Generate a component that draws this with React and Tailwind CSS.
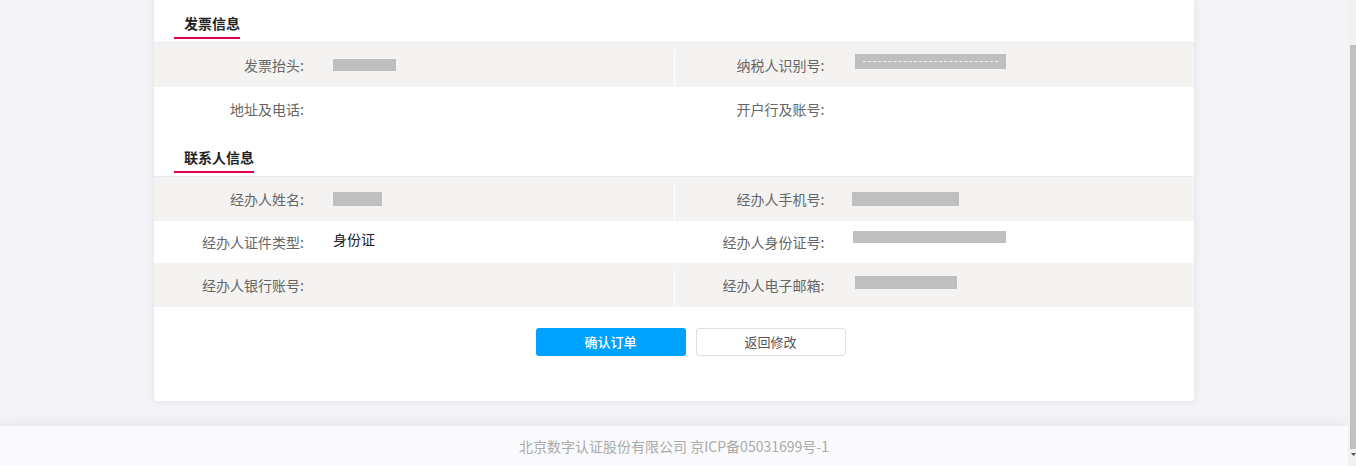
import React from "react";

const font = { fontFamily: '"Noto Sans CJK SC", "Noto Sans", "Liberation Sans", sans-serif' };

function Redacted({ w, h, dashed }) {
  return (
    <span className={`${w} ${h} bg-[#bfbfbf] flex items-center px-[8px]`}>
      {dashed && <span className="w-full border-t border-dashed border-white/80" />}
    </span>
  );
}

function SectionTitle({ children }) {
  return (
    <div className="h-[46px] border-b border-[#e9e9f1] flex items-end pl-[20px]">
      <div className="pl-[10px] pb-[3px] border-b-2 border-[#e4004f] text-[14px] font-bold text-[#222] leading-[22px] mb-[3px]">
        {children}
      </div>
    </div>
  );
}

function Row({ gray, h = "h-[44px]", left, right }) {
  return (
    <div className={`flex ${h} ${gray ? "bg-[#f4f3f2]" : "bg-white"}`}>
      <div className="flex-1 flex items-center">
        <span className="w-[150px] text-right text-[14px] text-[#666]">{left[0]}</span>
        <span className="ml-[29px] flex items-center">{left[1]}</span>
      </div>
      <div className={`w-px self-end h-[37px] ${gray ? "bg-white" : "bg-transparent"}`} />
      <div className="flex-1 flex items-center">
        <span className="w-[150px] text-right text-[14px] text-[#666]">{right[0]}</span>
        <span className="ml-[30px] flex items-center">{right[1]}</span>
      </div>
    </div>
  );
}

export default function App() {
  return (
    <div className="flex h-[466px] w-full overflow-hidden bg-[#f3f3f8]" style={font}>
      <div className="flex-1 flex flex-col">
        <div className="flex-1 flex justify-center">
          <div className="w-[1040px] h-[404px] -mt-[3px] bg-white rounded-b-[4px] shadow-[0_0_8px_rgba(0,0,0,0.08)] flex flex-col">
            <SectionTitle>发票信息</SectionTitle>
            <Row
              gray
              left={["发票抬头:", <Redacted w="w-[63px]" h="h-[12px]" />]}
              right={["纳税人识别号:", <span className="-mt-[8px] flex"><Redacted w="w-[151px]" h="h-[15px]" dashed /></span>]}
            />
            <Row left={["地址及电话:", null]} right={["开户行及账号:", null]} />
            <SectionTitle>联系人信息</SectionTitle>
            <Row
              gray
              left={["经办人姓名:", <Redacted w="w-[49px]" h="h-[14px]" />]}
              right={["经办人手机号:", <span className="-ml-[3px] flex"><Redacted w="w-[107px]" h="h-[14px]" /></span>]}
            />
            <Row
              h="h-[42px]"
              left={["经办人证件类型:", <span className="text-[14px] text-[#222] -mt-[6px]">身份证</span>]}
              right={["经办人身份证号:", <span className="-ml-[2px] -mt-[10px] flex"><Redacted w="w-[153px]" h="h-[12px]" /></span>]}
            />
            <Row
              gray
              left={["经办人银行账号:", null]}
              right={["经办人电子邮箱:", <span className="-mt-[6px] flex"><Redacted w="w-[102px]" h="h-[13px]" /></span>]}
            />
            <div className="flex justify-center gap-[10px] pl-[33px] mt-[21px]">
              <button className="w-[150px] h-[28px] rounded-[3px] bg-[#00a2ff] text-white text-[13px] font-medium">
                确认订单
              </button>
              <button className="w-[150px] h-[28px] rounded-[3px] bg-white border border-[#dcdfe6] text-[#555] text-[13px]">
                返回修改
              </button>
            </div>
          </div>
        </div>
        <div className="h-[40px] bg-[#fafafc] shadow-[0_-4px_12px_rgba(0,0,0,0.05)] flex items-center justify-center text-[14px] text-[#aaa]">
          北京数字认证股份有限公司 京ICP备05031699号-1
        </div>
      </div>
      <div className="w-[8px] bg-[#f1f1f1] flex flex-col pt-[45px] pl-[2px] pb-[6px]">
        <div className="flex-1 bg-[#c1c1c1]" />
        <div className="h-[11px] flex items-center justify-center">
          <svg width="5" height="3" viewBox="0 0 5 3">
            <path d="M0 0h5L2.5 3z" fill="#555" />
          </svg>
        </div>
      </div>
    </div>
  );
}
